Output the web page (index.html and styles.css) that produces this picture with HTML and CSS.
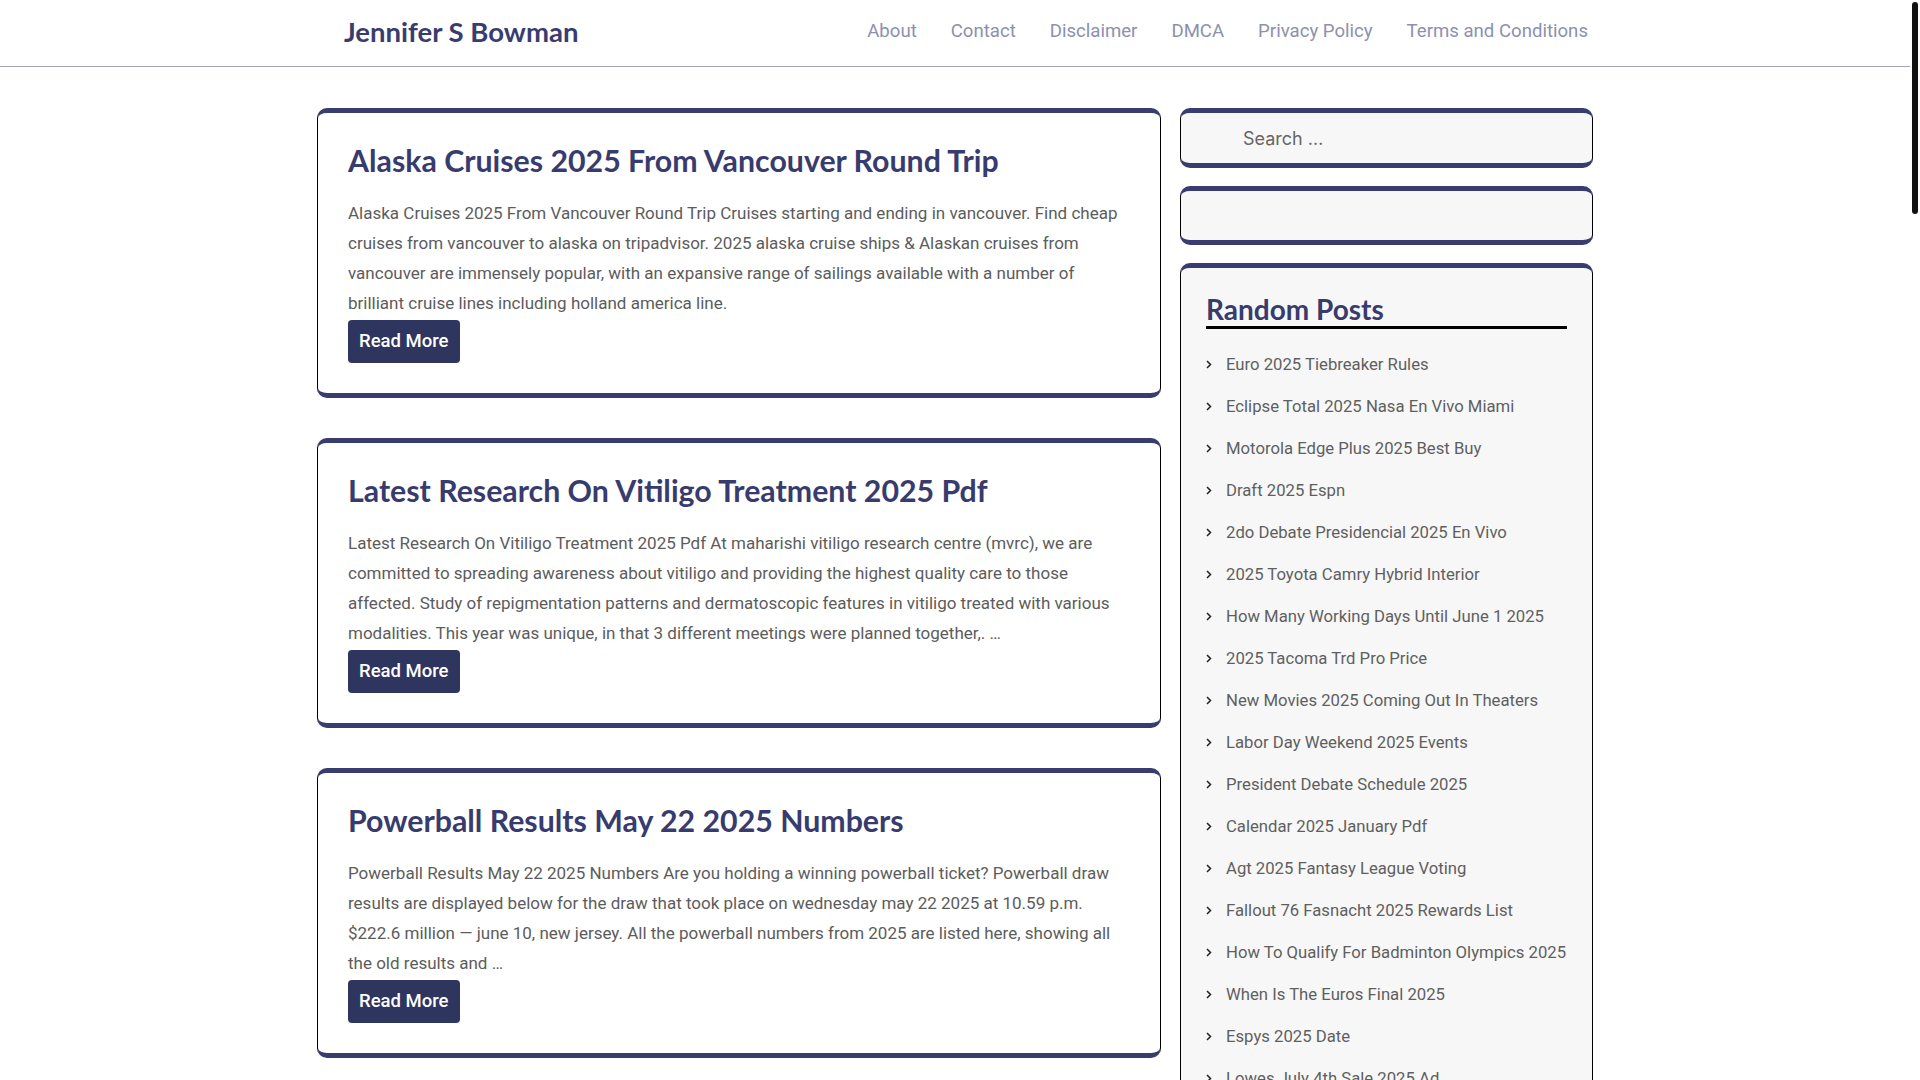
FILE: index.html
```html
<!DOCTYPE html>
<html lang="en">
<head>
<meta charset="utf-8">
<title>Jennifer S Bowman</title>
<link rel="stylesheet" href="styles.css">
</head>
<body>
<header class="site-header">
  <div class="container header-inner">
    <a class="logo" href="#">Jennifer S Bowman</a>
    <nav class="main-nav">
      <a href="#">About</a>
      <a href="#">Contact</a>
      <a href="#">Disclaimer</a>
      <a href="#">DMCA</a>
      <a href="#">Privacy Policy</a>
      <a href="#">Terms and Conditions</a>
    </nav>
  </div>
</header>

<div class="container layout">
  <main class="posts">
    <article class="card post">
      <h2 class="post-title">Alaska Cruises 2025 From Vancouver Round Trip</h2>
      <p class="excerpt">Alaska Cruises 2025 From Vancouver Round Trip Cruises starting and ending in vancouver. Find cheap cruises from vancouver to alaska on tripadvisor. 2025 alaska cruise ships &amp; Alaskan cruises from vancouver are immensely popular, with an expansive range of sailings available with a number of brilliant cruise lines including holland america line.</p>
      <a class="read-more" href="#">Read More</a>
    </article>
    <article class="card post">
      <h2 class="post-title">Latest Research On Vitiligo Treatment 2025 Pdf</h2>
      <p class="excerpt">Latest Research On Vitiligo Treatment 2025 Pdf At maharishi vitiligo research centre (mvrc), we are committed to spreading awareness about vitiligo and providing the highest quality care to those affected. Study of repigmentation patterns and dermatoscopic features in vitiligo treated with various modalities. This year was unique, in that 3 different meetings were planned together,. …</p>
      <a class="read-more" href="#">Read More</a>
    </article>
    <article class="card post">
      <h2 class="post-title">Powerball Results May 22 2025 Numbers</h2>
      <p class="excerpt">Powerball Results May 22 2025 Numbers Are you holding a winning powerball ticket? Powerball draw results are displayed below for the draw that took place on wednesday may 22 2025 at 10.59 p.m. $222.6 million — june 10, new jersey. All the powerball numbers from 2025 are listed here, showing all the old results and …</p>
      <a class="read-more" href="#">Read More</a>
    </article>
  </main>

  <aside class="sidebar">
    <div class="card widget search-widget">
      <input class="search-field" type="search" placeholder="Search …">
    </div>
    <div class="card widget empty-widget"></div>
    <div class="card widget list-widget">
      <h3 class="widget-title">Random Posts</h3>
      <ul class="post-list">
        <li><span class="chev"><svg width="6" height="9" viewBox="0 0 6 9"><polyline points="1,1 4.5,4.5 1,8" fill="none" stroke="#222" stroke-width="1.5"/></svg></span><a href="#">Euro 2025 Tiebreaker Rules</a></li>
        <li><span class="chev"><svg width="6" height="9" viewBox="0 0 6 9"><polyline points="1,1 4.5,4.5 1,8" fill="none" stroke="#222" stroke-width="1.5"/></svg></span><a href="#">Eclipse Total 2025 Nasa En Vivo Miami</a></li>
        <li><span class="chev"><svg width="6" height="9" viewBox="0 0 6 9"><polyline points="1,1 4.5,4.5 1,8" fill="none" stroke="#222" stroke-width="1.5"/></svg></span><a href="#">Motorola Edge Plus 2025 Best Buy</a></li>
        <li><span class="chev"><svg width="6" height="9" viewBox="0 0 6 9"><polyline points="1,1 4.5,4.5 1,8" fill="none" stroke="#222" stroke-width="1.5"/></svg></span><a href="#">Draft 2025 Espn</a></li>
        <li><span class="chev"><svg width="6" height="9" viewBox="0 0 6 9"><polyline points="1,1 4.5,4.5 1,8" fill="none" stroke="#222" stroke-width="1.5"/></svg></span><a href="#">2do Debate Presidencial 2025 En Vivo</a></li>
        <li><span class="chev"><svg width="6" height="9" viewBox="0 0 6 9"><polyline points="1,1 4.5,4.5 1,8" fill="none" stroke="#222" stroke-width="1.5"/></svg></span><a href="#">2025 Toyota Camry Hybrid Interior</a></li>
        <li><span class="chev"><svg width="6" height="9" viewBox="0 0 6 9"><polyline points="1,1 4.5,4.5 1,8" fill="none" stroke="#222" stroke-width="1.5"/></svg></span><a href="#">How Many Working Days Until June 1 2025</a></li>
        <li><span class="chev"><svg width="6" height="9" viewBox="0 0 6 9"><polyline points="1,1 4.5,4.5 1,8" fill="none" stroke="#222" stroke-width="1.5"/></svg></span><a href="#">2025 Tacoma Trd Pro Price</a></li>
        <li><span class="chev"><svg width="6" height="9" viewBox="0 0 6 9"><polyline points="1,1 4.5,4.5 1,8" fill="none" stroke="#222" stroke-width="1.5"/></svg></span><a href="#">New Movies 2025 Coming Out In Theaters</a></li>
        <li><span class="chev"><svg width="6" height="9" viewBox="0 0 6 9"><polyline points="1,1 4.5,4.5 1,8" fill="none" stroke="#222" stroke-width="1.5"/></svg></span><a href="#">Labor Day Weekend 2025 Events</a></li>
        <li><span class="chev"><svg width="6" height="9" viewBox="0 0 6 9"><polyline points="1,1 4.5,4.5 1,8" fill="none" stroke="#222" stroke-width="1.5"/></svg></span><a href="#">President Debate Schedule 2025</a></li>
        <li><span class="chev"><svg width="6" height="9" viewBox="0 0 6 9"><polyline points="1,1 4.5,4.5 1,8" fill="none" stroke="#222" stroke-width="1.5"/></svg></span><a href="#">Calendar 2025 January Pdf</a></li>
        <li><span class="chev"><svg width="6" height="9" viewBox="0 0 6 9"><polyline points="1,1 4.5,4.5 1,8" fill="none" stroke="#222" stroke-width="1.5"/></svg></span><a href="#">Agt 2025 Fantasy League Voting</a></li>
        <li><span class="chev"><svg width="6" height="9" viewBox="0 0 6 9"><polyline points="1,1 4.5,4.5 1,8" fill="none" stroke="#222" stroke-width="1.5"/></svg></span><a href="#">Fallout 76 Fasnacht 2025 Rewards List</a></li>
        <li><span class="chev"><svg width="6" height="9" viewBox="0 0 6 9"><polyline points="1,1 4.5,4.5 1,8" fill="none" stroke="#222" stroke-width="1.5"/></svg></span><a href="#">How To Qualify For Badminton Olympics 2025</a></li>
        <li><span class="chev"><svg width="6" height="9" viewBox="0 0 6 9"><polyline points="1,1 4.5,4.5 1,8" fill="none" stroke="#222" stroke-width="1.5"/></svg></span><a href="#">When Is The Euros Final 2025</a></li>
        <li><span class="chev"><svg width="6" height="9" viewBox="0 0 6 9"><polyline points="1,1 4.5,4.5 1,8" fill="none" stroke="#222" stroke-width="1.5"/></svg></span><a href="#">Espys 2025 Date</a></li>
        <li><span class="chev"><svg width="6" height="9" viewBox="0 0 6 9"><polyline points="1,1 4.5,4.5 1,8" fill="none" stroke="#222" stroke-width="1.5"/></svg></span><a href="#">Lowes July 4th Sale 2025 Ad</a></li>
        <li><span class="chev"><svg width="6" height="9" viewBox="0 0 6 9"><polyline points="1,1 4.5,4.5 1,8" fill="none" stroke="#222" stroke-width="1.5"/></svg></span><a href="#">Best Cars Of 2025 Under 30k</a></li>
        <li><span class="chev"><svg width="6" height="9" viewBox="0 0 6 9"><polyline points="1,1 4.5,4.5 1,8" fill="none" stroke="#222" stroke-width="1.5"/></svg></span><a href="#">Nfl Playoff Schedule 2025</a></li>
      </ul>
    </div>
  </aside>
</div>
<div class="scroll-thumb" aria-hidden="true"></div>
</body>
</html>
```

FILE: styles.css
```css
* { box-sizing: border-box; }

html, body {
  margin: 0;
  padding: 0;
  background: #ffffff;
}

html { scrollbar-width: none; }

body {
  font-family: Roboto, "Liberation Sans", sans-serif;
  color: #5a5a5a;
  padding-right: 10px;
}

a { text-decoration: none; }

.container {
  width: 1276px;
  margin: 0 auto;
}

/* Header */
.site-header {
  height: 67px;
  border-bottom: 1px solid #a3a2ba;
}

.header-inner {
  height: 100%;
  display: flex;
  align-items: center;
  justify-content: space-between;
  padding: 0 5px 4px 27px;
}

.logo {
  font-family: Lato, "Noto Sans", sans-serif;
  font-weight: 700;
  font-size: 27.5px;
  color: #393c6e;
}

.main-nav {
  display: flex;
  gap: 34px;
}

.main-nav a {
  font-size: 18.6px;
  color: #8d90ae;
}

/* Layout */
.layout {
  display: grid;
  grid-template-columns: 844px 413px;
  column-gap: 19px;
  align-items: start;
  margin-top: 41px;
}

.card {
  border: 1px solid #000;
  border-top: 5px solid #393c6e;
  border-bottom: 5px solid #393c6e;
  border-radius: 10px;
}

/* Posts */
.posts {
  display: flex;
  flex-direction: column;
  gap: 40px;
}

.post {
  background: #fff;
  padding: 27px 30px 30px 30px;
}

.post-title {
  margin: 0;
  font-family: Lato, "Noto Sans", sans-serif;
  font-weight: 700;
  font-size: 30.3px;
  line-height: 40px;
  color: #383b6d;
}

.excerpt {
  margin: 18px 0 2px 0;
  font-size: 17px;
  line-height: 30px;
  color: #5c5c5c;
}

.read-more {
  display: inline-block;
  height: 43px;
  line-height: 43px;
  padding: 0 11px;
  background: #2e355f;
  color: #fff;
  font-size: 18.5px;
  font-weight: 500;
  border-radius: 4px;
}

/* Sidebar */
.sidebar {
  display: flex;
  flex-direction: column;
  gap: 18px;
}

.widget {
  background: #f7f7f7;
}

.search-widget {
  height: 60px;
  display: flex;
  align-items: center;
}

.search-field {
  width: 100%;
  height: 100%;
  border: 0;
  outline: none;
  background: transparent;
  padding: 0 20px 0 62px;
  font-family: Inter, Roboto, sans-serif;
  font-size: 18px;
  color: #444;
}

.search-field::placeholder {
  color: #666;
}

.empty-widget {
  height: 59px;
}

.list-widget {
  padding: 24px 25px 0 25px;
}

.widget-title {
  margin: 0;
  font-family: Lato, "Noto Sans", sans-serif;
  font-weight: 700;
  font-size: 28px;
  line-height: 34px;
  color: #383b6d;
  border-bottom: 3px solid #000;
}

.post-list {
  list-style: none;
  margin: 14px 0 0 0;
  padding: 0;
}

.post-list li {
  display: flex;
  align-items: center;
  height: 42px;
}

.chev {
  width: 20px;
  display: flex;
  align-items: center;
}

.post-list a {
  font-size: 16.7px;
  color: #5f5f5f;
}

/* decorative overlay scrollbar thumb seen in the screenshot */
.scroll-thumb {
  position: fixed;
  top: 2px;
  right: 2px;
  width: 6px;
  height: 212px;
  background: #111;
  border-radius: 3px;
}
```
